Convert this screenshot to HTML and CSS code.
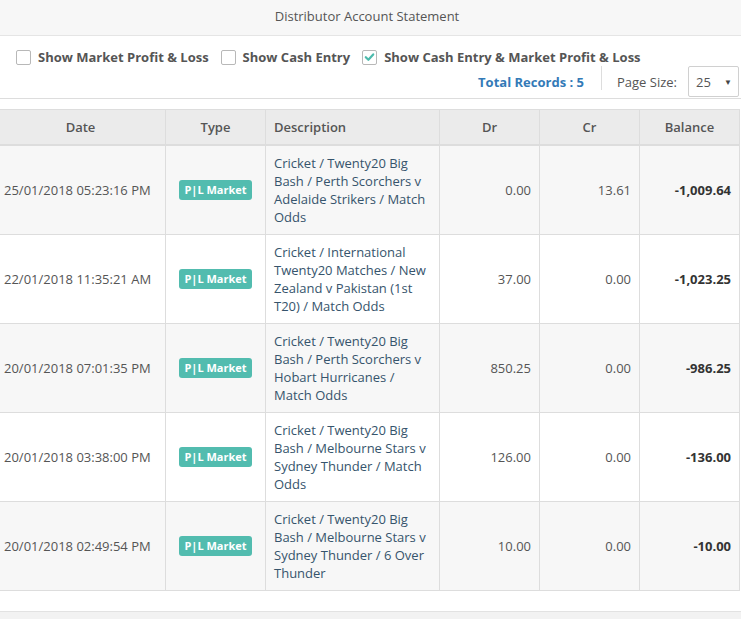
FILE: index.html
```html
<!DOCTYPE html>
<html>
<head>
<meta charset="utf-8">
<link rel="stylesheet" href="styles.css">
</head>
<body>
<div class="page">
  <div class="title">Distributor Account Statement</div>
  <div class="filters">
    <div class="checks">
      <label class="check"><span class="box"></span>Show Market Profit &amp; Loss</label>
      <label class="check"><span class="box"></span>Show Cash Entry</label>
      <label class="check"><span class="box checked"><svg viewBox="0 0 14 14" width="14" height="14"><path d="M3 7.2 L5.8 10 L11 4.2" fill="none" stroke="#4dbbad" stroke-width="2.4" stroke-linecap="round" stroke-linejoin="round"/></svg></span>Show Cash Entry &amp; Market Profit &amp; Loss</label>
    </div>
    <div class="meta">
      <span class="total">Total Records : 5</span>
      <span class="sep"></span>
      <span class="psize">Page Size:</span>
      <span class="select">25<span class="arrow">▼</span></span>
    </div>
  </div>
  <div class="table-wrap">
    <table class="stmt">
      <colgroup>
        <col class="c-date"><col class="c-type"><col class="c-desc"><col class="c-num"><col class="c-num"><col class="c-bal">
      </colgroup>
      <thead>
        <tr><th>Date</th><th>Type</th><th class="left">Description</th><th>Dr</th><th>Cr</th><th>Balance</th></tr>
      </thead>
      <tbody>
        <tr class="odd"><td>25/01/2018 05:23:16 PM</td><td class="center"><span class="badge">P|L Market</span></td><td class="desc">Cricket / Twenty20 Big Bash / Perth Scorchers v Adelaide Strikers / Match Odds</td><td class="num">0.00</td><td class="num">13.61</td><td class="num bal">-1,009.64</td></tr>
        <tr><td>22/01/2018 11:35:21 AM</td><td class="center"><span class="badge">P|L Market</span></td><td class="desc">Cricket / International Twenty20 Matches / New Zealand v Pakistan (1st T20) / Match Odds</td><td class="num">37.00</td><td class="num">0.00</td><td class="num bal">-1,023.25</td></tr>
        <tr class="odd"><td>20/01/2018 07:01:35 PM</td><td class="center"><span class="badge">P|L Market</span></td><td class="desc">Cricket / Twenty20 Big Bash / Perth Scorchers v Hobart Hurricanes / Match Odds</td><td class="num">850.25</td><td class="num">0.00</td><td class="num bal">-986.25</td></tr>
        <tr><td>20/01/2018 03:38:00 PM</td><td class="center"><span class="badge">P|L Market</span></td><td class="desc">Cricket / Twenty20 Big Bash / Melbourne Stars v Sydney Thunder / Match Odds</td><td class="num">126.00</td><td class="num">0.00</td><td class="num bal">-136.00</td></tr>
        <tr class="odd"><td>20/01/2018 02:49:54 PM</td><td class="center"><span class="badge">P|L Market</span></td><td class="desc">Cricket / Twenty20 Big Bash / Melbourne Stars v Sydney Thunder / 6 Over Thunder</td><td class="num">10.00</td><td class="num">0.00</td><td class="num bal">-10.00</td></tr>
      </tbody>
    </table>
  </div>
  <div class="footer"></div>
</div>
</body>
</html>
```
FILE: styles.css
```css
html, body {
  margin: 0;
  padding: 0;
  background: #fff;
}
body {
  font-family: "Open Sans", "Liberation Sans", sans-serif;
  color: #555;
  width: 741px;
  height: 619px;
  overflow: hidden;
}
.title {
  height: 35px;
  line-height: 33px;
  background: #f7f7f7;
  border-bottom: 1px solid #e5e5e5;
  text-align: center;
  font-size: 13px;
  color: #555;
  padding-right: 7px;
}
.filters {
  border-bottom: 1px solid #dddddd;
  padding: 0 2px 0 16px;
  height: 62px;
}
.checks {
  display: flex;
  align-items: center;
  height: 42px;
}
.check {
  display: flex;
  align-items: center;
  font-size: 13px;
  font-weight: 700;
  color: #555;
  margin-right: 12px;
}
.box {
  width: 13px;
  height: 13px;
  border: 1px solid #b8b8b8;
  border-radius: 2px;
  margin-right: 7px;
  display: inline-flex;
  align-items: center;
  justify-content: center;
  background: #fff;
}
.meta {
  display: flex;
  justify-content: flex-end;
  align-items: center;
  height: 31px;
  margin-top: -12px;
}
.total {
  font-size: 13px;
  font-weight: 700;
  color: #337ab7;
}
.sep {
  width: 1px;
  height: 24px;
  background: #dddddd;
  margin: 0 15px 0 17px;
  align-self: flex-start;
}
.psize {
  font-size: 13px;
  color: #555;
  margin-right: 11px;
}
.select {
  box-sizing: border-box;
  width: 51px;
  height: 31px;
  border: 1px solid #d0d0d0;
  border-radius: 2px;
  display: flex;
  align-items: center;
  justify-content: space-between;
  padding: 0 6px 0 7px;
  font-size: 13px;
  color: #555;
}
.arrow {
  font-size: 8px;
  color: #444;
}
.table-wrap {
  margin-top: 10px;
  margin-left: -5px;
  width: 746px;
}
.stmt {
  width: 744px;
  border-collapse: collapse;
  table-layout: fixed;
  font-size: 13px;
}
.c-date { width: 170px; }
.c-type { width: 100px; }
.c-desc { width: 174px; }
.c-num { width: 100px; }
.c-bal { width: 100px; }
.stmt th {
  background: #ebebeb;
  font-size: 13px;
  font-weight: 600;
  color: #555;
  text-align: center;
  padding: 8px;
  line-height: 18px;
  border: 1px solid #dddddd;
  border-bottom: 2px solid #dddddd;
}
.stmt th.left { text-align: left; }
.stmt td {
  padding: 8px;
  line-height: 18px;
  border: 1px solid #dddddd;
  vertical-align: middle;
  color: #555;
}
.stmt tr.odd td { background: #f7f7f7; }
.stmt td.center { text-align: center; }
.stmt td.desc { color: #36546c; }
.stmt td.num { text-align: right; }
.stmt td.bal { font-weight: 700; color: #333; }
.badge {
  display: inline-block;
  background: #52bcaf;
  color: #fff;
  font-size: 11px;
  font-weight: 700;
  line-height: 13px;
  padding: 3px 5px 4px;
  border-radius: 3px;
}
.footer {
  margin-top: 20px;
  border-top: 1px solid #e2e2e2;
  background: #f2f2f2;
  height: 7px;
}
```
